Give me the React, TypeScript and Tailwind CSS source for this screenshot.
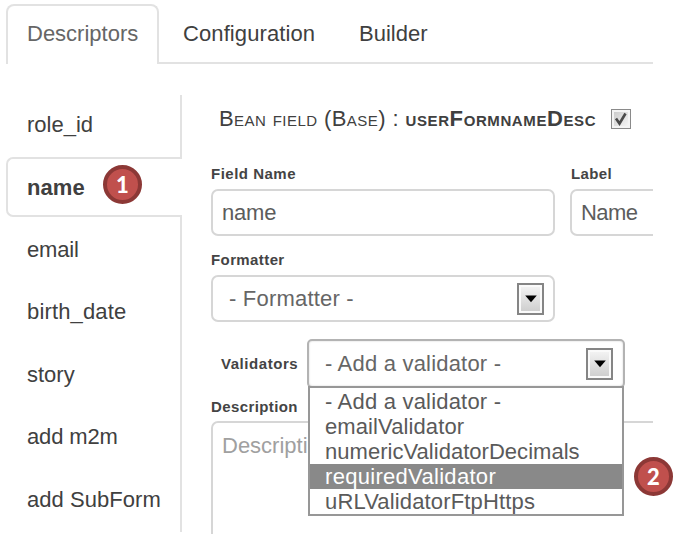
const navItems = [
  { text: "role_id", track: "tracking-[0px]" },
  { text: "name", track: "tracking-[0.1px]", active: true },
  { text: "email", track: "tracking-[-0.2px]" },
  { text: "birth_date", track: "tracking-[0.15px]" },
  { text: "story", track: "tracking-[0px]" },
  { text: "add m2m", track: "tracking-[-0.15px]" },
  { text: "add SubForm", track: "tracking-[0.05px]" },
];

const options = [
  { text: "- Add a validator -", track: "tracking-[0.2px]" },
  { text: "emailValidator", track: "tracking-[0.1px]" },
  { text: "numericValidatorDecimals", track: "tracking-[0.03px]" },
  { text: "requiredValidator", track: "tracking-[0.3px]", selected: true },
  { text: "uRLValidatorFtpHttps", track: "tracking-[0.15px]" },
];

function Arrow() {
  return (
    <span className="flex h-[32px] w-[27px] shrink-0 items-center justify-center border-2 border-[#858585] bg-[#fafafa] p-[2px]">
      <span className="flex h-full w-full items-center justify-center bg-gradient-to-b from-[#f2f2f2] to-[#cfcfcf]">
        <svg width="12" height="8" viewBox="0 0 12 8" className="block shrink-0">
          <path d="M0.2 0.5H11.8L6 7.2Z" fill="#000" />
        </svg>
      </span>
    </span>
  );
}

function Badge({ n, place }: { n: number; place: string }) {
  return (
    <span
      className={`absolute flex h-[39px] w-[39px] items-center justify-center rounded-full border-4 border-[#8c3836] bg-[#c0504d] font-['Lato',sans-serif] text-[22px] font-black leading-none text-white ${place}`}
    >
      {n}
    </span>
  );
}

const label = "block h-[18px] text-[15px] font-bold leading-[18px] text-[#444]";

export default function App() {
  return (
    <div className="relative h-[534px] w-[675px] overflow-hidden bg-white font-['Liberation_Sans',Arial,sans-serif] text-[22px] leading-[26px] text-[#404040]">
      <div className="h-[534px] w-[653px] overflow-hidden">
        <nav className="flex h-[64px] whitespace-nowrap pl-[6px] pt-[4px]">
          <div className="h-[60px] w-[153px] rounded-t-[8px] border-2 border-b-0 border-[#e2e2e2] pl-[19px] pt-[15px] text-[#666]">
            Descriptors
          </div>
          <div className="w-[176px] border-b-2 border-[#e2e2e2] pl-[24px] pt-[17px] tracking-[0.1px]">
            Configuration
          </div>
          <div className="flex-1 border-b-2 border-[#e2e2e2] pl-[24px] pt-[17px]">Builder</div>
        </nav>
        <div className="flex">
          <aside className="mt-[31px] flex h-[437px] w-[182px] shrink-0 flex-col whitespace-nowrap pl-[6px]">
            {navItems.map((it, i) =>
              it.active ? (
                <div
                  key={it.text}
                  className={`h-[60px] shrink-0 rounded-l-[7px] border-2 border-r-0 border-[#e2e2e2] pl-[19px] pt-[16px] font-bold ${it.track}`}
                >
                  {it.text}
                </div>
              ) : (
                <div
                  key={it.text}
                  className={`shrink-0 border-r-2 border-[#e2e2e2] pl-[21px] ${it.track} ${
                    i === 0 ? "h-[62px] pt-[17px]" : i === 6 ? "h-[65px] pt-[20px]" : "h-[62.4px] pt-[20px]"
                  }`}
                >
                  {it.text}
                </div>
              ),
            )}
          </aside>
          <main className="w-[471px] overflow-hidden whitespace-nowrap pl-[29px] pt-[40px]">
            <div className="flex h-[30px] items-center pl-[8px]">
              <h2 className="w-[392px] [font-variant:small-caps]">
                <span className="tracking-[0.43px]">Bean field (Base) : </span>
                <b className="tracking-[0.6px]">userFormnameDesc</b>
              </h2>
              <span className="flex h-[20px] w-[20px] items-center justify-center border border-[#8a8a8a] bg-[#f4f4f4] p-[2px]">
                <span className="flex h-full w-full items-center justify-center bg-gradient-to-br from-[#cccccc] to-[#f4f4f4]">
                  <svg width="16" height="16" viewBox="0 0 16 16" className="block shrink-0">
                    <path d="M3 7.5L6.5 12.5L12.5 2.5" fill="none" stroke="#4a4a4a" strokeWidth="2.6" />
                  </svg>
                </span>
              </span>
            </div>
            <div className="mt-[31px] flex gap-[15px]">
              <div className="w-[344px] shrink-0">
                <span className={`${label} tracking-[0.5px]`}>Field Name</span>
                <div className="mt-[6px] h-[47px] rounded-[7px] border-2 border-[#d6d6d6] pl-[9px] pt-[9px] tracking-[-0.2px] text-[#5c5c5c]">
                  name
                </div>
              </div>
              <div className="w-[344px] shrink-0">
                <span className={`${label} pl-[1px] tracking-[0.4px]`}>Label</span>
                <div className="mt-[6px] h-[47px] rounded-[7px] border-2 border-[#d6d6d6] pl-[9px] pt-[9px] tracking-[-0.6px] text-[#5c5c5c]">
                  Name
                </div>
              </div>
            </div>
            <span className={`${label} mt-[15px] tracking-[0.4px]`}>Formatter</span>
            <div className="mt-[6px] flex h-[47px] w-[344px] items-center justify-between rounded-[7px] border-2 border-[#d6d6d6] pl-[16px] pr-[9px] text-[#666]">
              <span className="tracking-[0.2px]">- Formatter -</span>
              <Arrow />
            </div>
            <div className="mt-[17px] flex">
              <span className={`${label} mt-[16px] w-[96px] pl-[10px] tracking-[0.55px]`}>Validators</span>
              <div className="relative flex h-[49px] w-[318px] items-center justify-between rounded-[5px] border-2 border-[#b3b3b3] pl-[16px] pr-[10px] text-[#666] shadow-[inset_0_0_2px_#ccc]">
                <span className="pt-px tracking-[0.2px]">- Add a validator -</span>
                <Arrow />
                <div className="absolute left-[-1px] top-[45px] z-10 h-[130px] w-[316px] border-2 border-[#979797] bg-white pt-[1px]">
                  {options.map((o) => (
                    <div
                      key={o.text}
                      className={`h-[25px] pl-[15px] leading-[25px] ${o.track} ${
                        o.selected ? "bg-[#898989] text-white" : "text-[#5a5a5a]"
                      }`}
                    >
                      {o.text}
                    </div>
                  ))}
                </div>
              </div>
            </div>
            <span className={`${label} mt-[10px] tracking-[0.4px]`}>Description</span>
            <div className="mt-[5px] h-[140px] w-[703px] rounded-[7px] border-2 border-[#d6d6d6] pl-[9px] pt-[10px] text-[#a0a0a0]">
              Description
            </div>
          </main>
        </div>
      </div>
      <Badge n={1} place="left-[103px] top-[165px]" />
      <Badge n={2} place="left-[634px] top-[457px]" />
    </div>
  );
}
